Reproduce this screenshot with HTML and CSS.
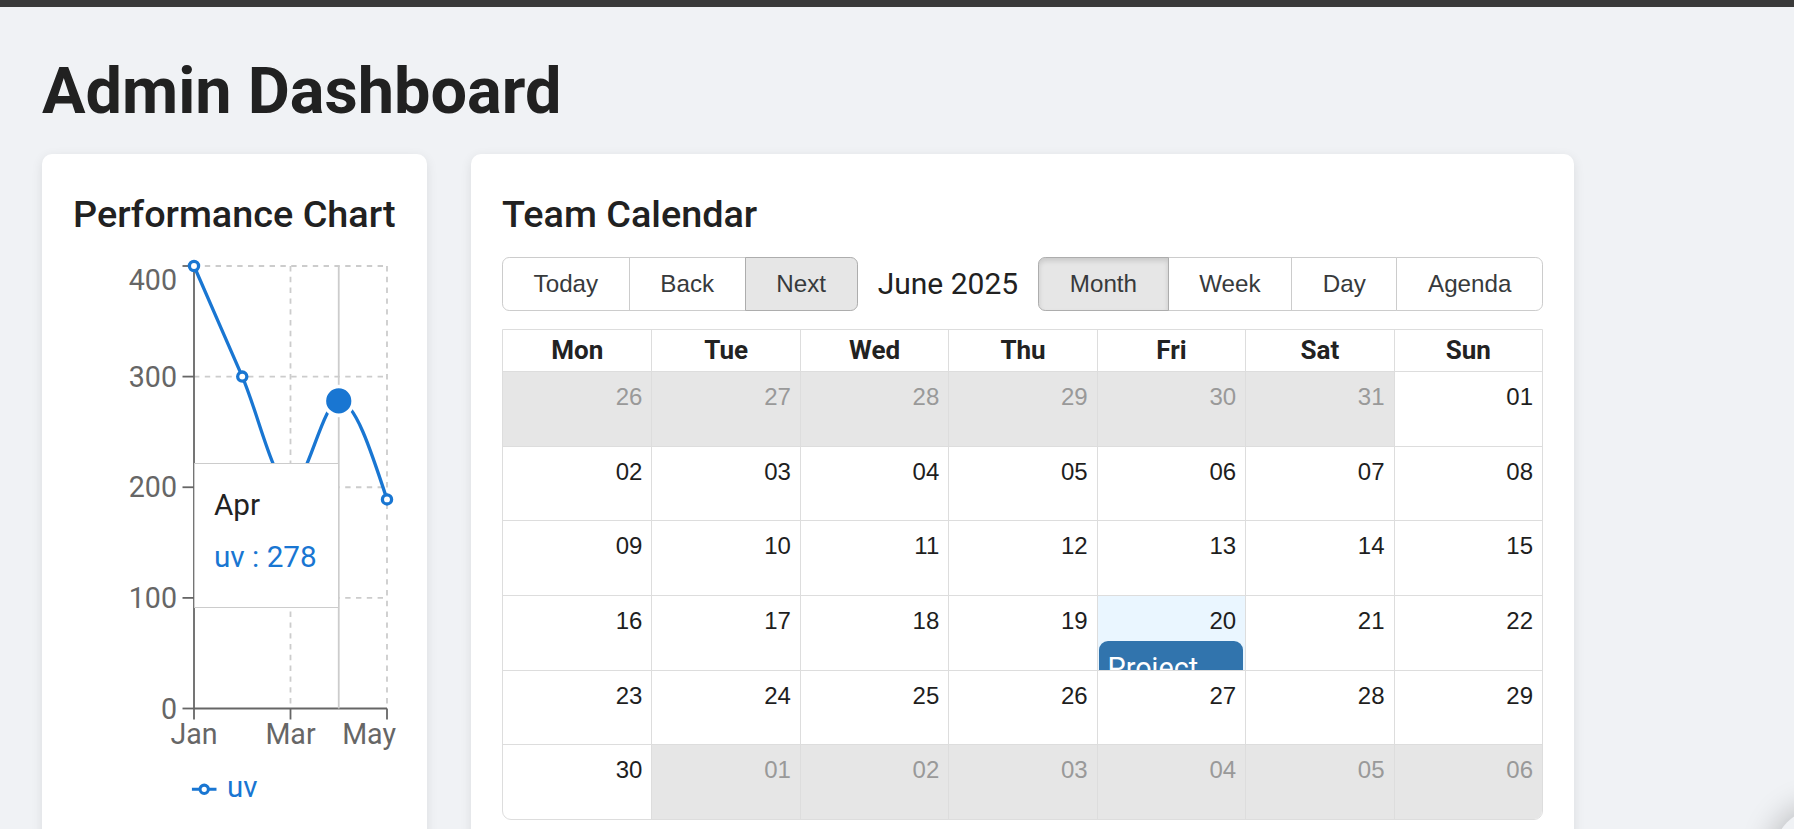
FILE: index.html
```html
<!DOCTYPE html>
<html lang="en">
<head>
<meta charset="utf-8">
<title>Admin Dashboard</title>
<link rel="stylesheet" href="styles.css">
</head>
<body>
<div class="topbar"></div>
<main class="page">
  <h1 class="title">Admin Dashboard</h1>
  <div class="cards">
    <section class="card chart-card">
      <h2 class="card-title">Performance Chart</h2>
      <div class="chart">
        <svg class="chart-svg" width="323" height="600" viewBox="0 0 323 600">
          <g class="grid">
            <line x1="121" y1="26" x2="314" y2="26"/>
            <line x1="121" y1="136.6" x2="314" y2="136.6"/>
            <line x1="121" y1="247.25" x2="314" y2="247.25"/>
            <line x1="121" y1="357.9" x2="314" y2="357.9"/>
            <line x1="217.5" y1="26" x2="217.5" y2="468.5"/>
            <line x1="314" y1="26" x2="314" y2="468.5"/>
          </g>
          <g class="axis">
            <line x1="121" y1="26" x2="121" y2="468.5"/>
            <line x1="109.5" y1="26" x2="121" y2="26"/>
            <line x1="109.5" y1="136.6" x2="121" y2="136.6"/>
            <line x1="109.5" y1="247.25" x2="121" y2="247.25"/>
            <line x1="109.5" y1="357.9" x2="121" y2="357.9"/>
            <line x1="109.5" y1="468.5" x2="121" y2="468.5"/>
            <line x1="121" y1="468.5" x2="314" y2="468.5"/>
            <line x1="121" y1="468.5" x2="121" y2="479.5"/>
            <line x1="217.5" y1="468.5" x2="217.5" y2="479.5"/>
            <line x1="314" y1="468.5" x2="314" y2="479.5"/>
          </g>
          <g class="tick-text">
            <text x="104" y="50" text-anchor="end">400</text>
            <text x="104" y="147.3" text-anchor="end">300</text>
            <text x="104" y="257.3" text-anchor="end">200</text>
            <text x="104" y="368.3" text-anchor="end">100</text>
            <text x="104" y="479" text-anchor="end">0</text>
            <text x="121" y="504" text-anchor="middle">Jan</text>
            <text x="217.5" y="504" text-anchor="middle">Mar</text>
            <text x="323" y="504" text-anchor="end">May</text>
          </g>
          <line class="cursor" x1="265.75" y1="26" x2="265.75" y2="468.5"/>
          <path class="series" d="M121,26 C137.08,62.87 153.17,99.73 169.25,136.6 C185.33,173.47 201.42,247.25 217.5,247.25 C233.58,247.25 249.67,160.96 265.75,160.96 C281.83,160.96 297.92,210.2 314,259.4"/>
          <g class="dots">
            <circle cx="121" cy="26" r="4.6"/>
            <circle cx="169.25" cy="136.6" r="4.6"/>
            <circle cx="217.5" cy="247.25" r="4.6"/>
            <circle cx="314" cy="259.4" r="4.6"/>
          </g>
          <circle class="active-dot" cx="265.75" cy="160.96" r="14.4"/>
          <svg x="118.7" y="536.8" width="25" height="25" viewBox="0 0 32 32">
            <path class="legend-icon" d="M0,16h10.666666666666666A5.333333333333333,5.333333333333333,0,1,1,21.333333333333332,16H32M21.333333333333332,16A5.333333333333333,5.333333333333333,0,1,1,10.666666666666666,16"/>
          </svg>
          <text class="legend-text" x="154" y="557.3">uv</text>
        </svg>
        <div class="tooltip">
          <p class="tt-label">Apr</p>
          <ul class="tt-list"><li class="tt-item">uv : 278</li></ul>
        </div>
      </div>
    </section>

    <section class="card calendar-card">
      <h2 class="card-title cal-title">Team Calendar</h2>
      <div class="toolbar">
        <div class="btn-group">
          <button class="tb-btn" type="button">Today</button>
          <button class="tb-btn" type="button">Back</button>
          <button class="tb-btn hover" type="button">Next</button>
        </div>
        <span class="tb-label">June 2025</span>
        <div class="btn-group">
          <button class="tb-btn active" type="button">Month</button>
          <button class="tb-btn" type="button">Week</button>
          <button class="tb-btn" type="button">Day</button>
          <button class="tb-btn" type="button">Agenda</button>
        </div>
      </div>
      <div class="month">
        <div class="month-header">
          <div class="hdr">Mon</div><div class="hdr">Tue</div><div class="hdr">Wed</div><div class="hdr">Thu</div><div class="hdr">Fri</div><div class="hdr">Sat</div><div class="hdr">Sun</div>
        </div>
        <div class="month-row">
          <div class="cell off"><span class="date">26</span></div>
          <div class="cell off"><span class="date">27</span></div>
          <div class="cell off"><span class="date">28</span></div>
          <div class="cell off"><span class="date">29</span></div>
          <div class="cell off"><span class="date">30</span></div>
          <div class="cell off"><span class="date">31</span></div>
          <div class="cell"><span class="date">01</span></div>
        </div>
        <div class="month-row">
          <div class="cell"><span class="date">02</span></div>
          <div class="cell"><span class="date">03</span></div>
          <div class="cell"><span class="date">04</span></div>
          <div class="cell"><span class="date">05</span></div>
          <div class="cell"><span class="date">06</span></div>
          <div class="cell"><span class="date">07</span></div>
          <div class="cell"><span class="date">08</span></div>
        </div>
        <div class="month-row">
          <div class="cell"><span class="date">09</span></div>
          <div class="cell"><span class="date">10</span></div>
          <div class="cell"><span class="date">11</span></div>
          <div class="cell"><span class="date">12</span></div>
          <div class="cell"><span class="date">13</span></div>
          <div class="cell"><span class="date">14</span></div>
          <div class="cell"><span class="date">15</span></div>
        </div>
        <div class="month-row">
          <div class="cell"><span class="date">16</span></div>
          <div class="cell"><span class="date">17</span></div>
          <div class="cell"><span class="date">18</span></div>
          <div class="cell"><span class="date">19</span></div>
          <div class="cell today"><span class="date">20</span><div class="event">Project Kickoff</div></div>
          <div class="cell"><span class="date">21</span></div>
          <div class="cell"><span class="date">22</span></div>
        </div>
        <div class="month-row">
          <div class="cell"><span class="date">23</span></div>
          <div class="cell"><span class="date">24</span></div>
          <div class="cell"><span class="date">25</span></div>
          <div class="cell"><span class="date">26</span></div>
          <div class="cell"><span class="date">27</span></div>
          <div class="cell"><span class="date">28</span></div>
          <div class="cell"><span class="date">29</span></div>
        </div>
        <div class="month-row">
          <div class="cell"><span class="date">30</span></div>
          <div class="cell off"><span class="date">01</span></div>
          <div class="cell off"><span class="date">02</span></div>
          <div class="cell off"><span class="date">03</span></div>
          <div class="cell off"><span class="date">04</span></div>
          <div class="cell off"><span class="date">05</span></div>
          <div class="cell off"><span class="date">06</span></div>
        </div>
      </div>
    </section>
  </div>
</main>
<div class="corner-float"></div>
</body>
</html>
```

FILE: styles.css
```css
html, body {
  margin: 0;
  padding: 0;
}
body {
  background: #f0f2f5;
  font-family: Roboto, "Noto Sans", "Liberation Sans", sans-serif;
  color: #222;
  overflow: hidden;
}
.topbar {
  height: 7px;
  background: #3a3a3a;
}
.page {
  padding: 0 42px;
}
.title {
  margin: 45.6px 0 25.4px;
  font-size: 64.8px;
  line-height: 76px;
  font-weight: 700;
  color: #212121;
}
.cards {
  display: flex;
  align-items: flex-start;
  gap: 44px;
}
.card {
  background: #fff;
  border-radius: 10px;
  box-shadow: 0 3px 12px rgba(0, 0, 0, 0.09);
  padding: 31px;
  box-sizing: border-box;
}
.chart-card {
  width: 385px;
}
.calendar-card {
  width: 1103px;
}
.card-title {
  margin: 7px 0 4px;
  font-size: 37.8px;
  line-height: 44px;
  font-weight: 500;
  color: #212121;
}
.cal-title {
  margin-bottom: 21.3px;
}

/* chart */
.chart {
  position: relative;
  width: 323px;
  height: 600px;
}
.chart-svg {
  display: block;
  overflow: visible;
}
.grid line {
  stroke: #ccc;
  stroke-width: 1.8;
  stroke-dasharray: 5.4 5.4;
}
.axis line {
  stroke: #666;
  stroke-width: 1.8;
}
.tick-text text {
  font-family: Roboto, sans-serif;
  font-size: 28.6px;
  fill: #666;
}
.cursor {
  stroke: #ccc;
  stroke-width: 1.8;
}
.series {
  fill: none;
  stroke: #1976d2;
  stroke-width: 3.3;
}
.dots circle {
  fill: #fff;
  stroke: #1976d2;
  stroke-width: 3.3;
}
.active-dot {
  fill: #1976d2;
  stroke: #fff;
  stroke-width: 3.6;
}
.legend-icon {
  fill: none;
  stroke: #1976d2;
  stroke-width: 4;
}
.legend-text {
  font-family: Roboto, sans-serif;
  font-size: 29.4px;
  fill: #1976d2;
}
.tooltip {
  position: absolute;
  left: 121px;
  top: 223.3px;
  width: 145px;
  box-sizing: border-box;
  background: #fff;
  border: 1px solid #ccc;
  padding: 19px 19px 20px;
  white-space: nowrap;
  font-size: 29.7px;
}
.tt-label {
  margin: 0;
  line-height: 44.5px;
  color: #222;
}
.tt-list {
  margin: 0;
  padding: 0;
  list-style: none;
}
.tt-item {
  padding: 7.2px 0;
  line-height: 44.5px;
  color: #1976d2;
}

/* calendar toolbar */
.toolbar {
  display: flex;
  align-items: center;
  margin-bottom: 18.5px;
}
.btn-group {
  display: inline-flex;
  flex: none;
}
.tb-btn {
  font-family: "Liberation Sans", Arial, sans-serif;
  font-size: 24.2px;
  color: #373a3c;
  background: #fff;
  border: 1px solid #ccc;
  height: 53.4px;
  padding: 0 30.6px;
  margin: 0;
  border-radius: 0;
  white-space: nowrap;
}
.tb-btn + .tb-btn {
  margin-left: -1px;
}
.tb-btn:first-child {
  border-radius: 7.2px 0 0 7.2px;
}
.tb-btn:last-child {
  border-radius: 0 7.2px 7.2px 0;
}
.tb-btn.hover {
  background: #e6e6e6;
  border-color: #adadad;
  position: relative;
}
.tb-btn.active {
  background: #e6e6e6;
  border-color: #adadad;
  box-shadow: inset 0 3px 5px rgba(0, 0, 0, 0.125);
  position: relative;
}
.tb-label {
  flex: 1 1 auto;
  min-width: 0;
  text-align: center;
  padding: 0 8px;
  white-space: nowrap;
  font-size: 30px;
  color: #212121;
}

/* month view */
.month {
  border: 1px solid #ddd;
  border-radius: 0 0 9px 9px;
  overflow: hidden;
}
.month-header {
  display: grid;
  grid-template-columns: repeat(7, 1fr);
  height: 41px;
}
.hdr {
  font-weight: 700;
  font-size: 26px;
  line-height: 41px;
  text-align: center;
  color: #222;
  box-sizing: border-box;
}
.hdr + .hdr {
  border-left: 1px solid #ddd;
}
.month-row {
  display: grid;
  grid-template-columns: repeat(7, 1fr);
  height: 74.67px;
  box-sizing: border-box;
  border-top: 1px solid #ddd;
  overflow: hidden;
}
.cell {
  box-sizing: border-box;
  display: flex;
  flex-direction: column;
  align-items: stretch;
  min-width: 0;
}
.cell + .cell {
  border-left: 1px solid #ddd;
}
.cell.off {
  background: #e6e6e6;
}
.cell.today {
  background: #eaf6ff;
}
.date {
  display: block;
  padding: 11px 9px 0 0;
  text-align: right;
  font-family: "Liberation Sans", Arial, sans-serif;
  font-size: 24px;
  line-height: 28px;
  color: #1e1e1e;
}
.cell.off .date {
  color: #999;
}
.event {
  margin: 6px 1.8px 0 0.8px;
  padding: 5px 9px;
  background: #3174ad;
  color: #fff;
  border-radius: 9px;
  font-size: 28.8px;
  line-height: 44px;
}

.corner-float {
  position: fixed;
  right: -70px;
  bottom: -70px;
  width: 90px;
  height: 90px;
  border-radius: 50%;
  background: #f0f2f5;
  box-shadow: 0 0 30px 4px rgba(0, 0, 0, 0.22);
}
```
